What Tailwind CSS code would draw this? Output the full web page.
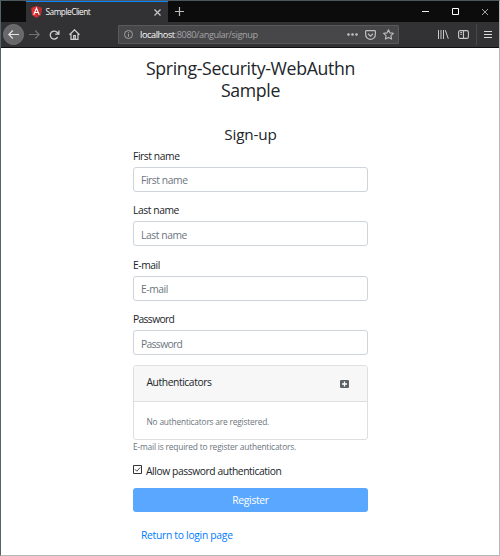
<!DOCTYPE html>
<html lang="en">
<head>
<meta charset="utf-8">
<title>SampleClient</title>
<script src="https://cdn.jsdelivr.net/npm/@tailwindcss/browser@4"></script>
</head>
<body class="w-[500px] h-[556px] overflow-hidden bg-white font-['Open_Sans','Noto_Sans',sans-serif] text-[#212529]">
<div class="w-[500px] h-[556px] flex flex-col border border-t-[#4b5860] border-l-[#56636c] border-r-[#b4b7b9] border-b-[#b4b7b9]">
  <!-- Tab strip -->
  <div class="h-[21px] shrink-0 flex bg-[#0c0c0d] text-[#f9f9fa]">
    <div class="ml-[25px] w-[142px] h-full bg-[#323234] border-t border-[#0a84ff] flex items-center pl-[5px] pr-[7px]">
      <svg class="w-[11px] h-[12px] shrink-0" viewBox="0 0 22 24"><path fill="#e23237" d="M11 0 21.5 3.8 20 18 11 23.5 2 18 .5 3.8z"/><path fill="#b52e31" d="M11 0v23.5L20 18l1.500-14.200z"/><path fill="none" stroke="#fff" stroke-width="2.200" d="M5.500 17.500 11 4.500l5.500 13M8 13h6"/></svg>
      <span class="ml-[3.500px] text-[8.300px] leading-[12px] tracking-[-0.5px] flex-1 whitespace-nowrap">SampleClient</span>
      <svg class="w-[7px] h-[7px] shrink-0" viewBox="0 0 7 7" stroke="#c8c8c9" stroke-width="1.200"><path d="M.5.5l6 6M6.500.5l-6 6"/></svg>
    </div>
    <svg class="ml-[7px] mt-[6px] w-[9px] h-[9px]" viewBox="0 0 9 9" stroke="#bcbcbd" stroke-width="1.200"><path d="M4.500 0v9M0 4.500h9"/></svg>
    <div class="ml-auto flex items-center pr-[11px] gap-[23px]">
      <svg class="w-[7px] h-[7px]" viewBox="0 0 7 7" stroke="#eee"><path d="M0 3.500h7"/></svg>
      <svg class="w-[7px] h-[7px]" viewBox="0 0 7 7" stroke="#fff" fill="none"><path d="M.5.5h6v6h-6z"/></svg>
      <svg class="w-[6px] h-[6px]" viewBox="0 0 6 6" stroke="#ccc" stroke-width=".8"><path d="M0 0l6 6M6 0L0 6"/></svg>
    </div>
  </div>
  <!-- Navigation toolbar -->
  <div class="h-[26px] shrink-0 flex items-center bg-[#323234] border-b border-[#101011] pl-[2px] pr-[7px]">
    <div class="w-[21px] h-[21px] rounded-full bg-[#68686a] border border-[#737375] flex items-center justify-center">
      <svg class="w-[11px] h-[9px]" viewBox="0 0 11 9" fill="none" stroke="#e4e4e5" stroke-width="1.200"><path d="M11 4.500H1M4.800.5l-4 4 4 4"/></svg>
    </div>
    <svg class="ml-[5px] w-[11px] h-[9px]" viewBox="0 0 11 9" fill="none" stroke="#717173" stroke-width="1.200"><path d="M0 4.500h10M6.200.5l4 4-4 4"/></svg>
    <svg class="ml-[9px] w-[11px] h-[10px]" viewBox="0 0 11 10" fill="none" stroke="#d0d0d1" stroke-width="1.300"><path d="M8.600 7.200A4 4 0 1 1 8.300 2.500l1 1M9.900.5v3.700H6.200"/></svg>
    <svg class="ml-[9px] w-[11px] h-[11px]" viewBox="0 0 11 11" fill="none" stroke="#d0d0d1" stroke-width="1.200"><path d="M.5 5.700 5.500.8l5 4.900M2 5v5.300h7V5M4.700 10V6.500h1.600V10"/></svg>
    <div class="ml-[38px] w-[281px] h-[19px] bg-[#474749] border border-[#59595b] rounded-[1px] flex items-center pl-[5px] pr-[4px]">
      <svg class="w-[9px] h-[9px] shrink-0" viewBox="0 0 9 9" fill="none" stroke="#aaaaac" stroke-width=".9"><circle cx="4.500" cy="4.500" r="4"/><path d="M4.500 4v2.800M4.500 2.200v1"/></svg>
      <span class="ml-[7px] text-[9.200px] leading-[14px] tracking-[-0.42px] text-[#a5a5a7] whitespace-nowrap"><span class="text-[#f9f9fa]">localhost</span>:8080/angular/signup</span>
      <svg class="ml-auto w-[11px] h-[3px]" viewBox="0 0 11 3" fill="#c4c4c5"><circle cx="1.500" cy="1.500" r="1.300"/><circle cx="5.500" cy="1.500" r="1.300"/><circle cx="9.500" cy="1.500" r="1.300"/></svg>
      <svg class="ml-[7px] w-[11px] h-[10px]" viewBox="0 0 11 10" fill="none" stroke="#bdbdbe" stroke-width="1.200"><path d="M1.300.7h8.400q.7 0 .7.700v3.100a4.900 4.800 0 0 1-9.800 0V1.400q0-.7.700-.7zM3 3.700l2.500 2.400L8 3.700"/></svg>
      <svg class="ml-[7px] w-[11px] h-[11px]" viewBox="0 0 11 11" fill="none" stroke="#bdbdbe" stroke-width="1.100" stroke-linejoin="round"><path d="M5.500.7 7 3.900l3.400.4-2.500 2.300.7 3.500-3.100-1.700-3.100 1.700.7-3.500L.6 4.300 4 3.900z"/></svg>
    </div>
    <svg class="ml-[39px] w-[11px] h-[9px]" viewBox="0 0 11 9" fill="none" stroke="#c8c8c9"><path d="M.5 0v9M3 0v9M5.500 0v9M7.300.2l3 8.500"/></svg>
    <svg class="ml-[9px] w-[11px] h-[9px]" viewBox="0 0 11 9" fill="none" stroke="#c8c8c9" stroke-width="1.100"><rect x=".6" y=".6" width="9.800" height="7.800" rx="1.500"/><path d="M5.500.5v8M2.300 2.500h1.800M2.300 4.300h1.800"/></svg>
    <div class="ml-[7px] w-px h-[21px] bg-[#48484a]"></div>
    <svg class="ml-auto w-[8px] h-[9px]" viewBox="0 0 8 9" stroke="#dcdcdd"><path d="M0 1.500h8M0 4.500h8M0 7.500h8"/></svg>
  </div>
  <!-- Sign-up page -->
  <main class="w-[235px] ml-[132px] flex flex-col text-[10.300px] leading-[16px] tracking-[-0.42px]">
    <h1 class="mt-[10px] text-[17.700px] leading-[21.500px] text-center tracking-[-0.33px]">Spring-Security-WebAuthn<br>Sample</h1>
    <h2 class="mt-[25px] h-[17px] text-[15.300px] leading-[17px] text-center tracking-[-0.15px]">Sign-up</h2>
    <form class="mt-[4.500px] flex flex-col">
      <label class="h-[54.500px] flex flex-col">First name
        <span class="mt-[3px] h-[25px] border border-[#ced4da] rounded-[3px] px-[7px] pt-[4.500px] leading-[16px] text-[#6c757d]">First name</span></label>
      <label class="h-[54.500px] flex flex-col">Last name
        <span class="mt-[3px] h-[25px] border border-[#ced4da] rounded-[3px] px-[7px] pt-[4.500px] leading-[16px] text-[#6c757d]">Last name</span></label>
      <label class="h-[54.500px] flex flex-col">E-mail
        <span class="mt-[3px] h-[25px] border border-[#ced4da] rounded-[3px] px-[7px] pt-[4.500px] leading-[16px] text-[#6c757d]">E-mail</span></label>
      <label class="h-[54px] flex flex-col tracking-[-0.65px]">Password
        <span class="mt-[3px] h-[25px] border border-[#ced4da] rounded-[3px] px-[7px] pt-[4.500px] leading-[16px] text-[#6c757d]">Password</span></label>
      <section class="h-[75px] border border-[#dfdfdf] rounded-[3px] overflow-hidden">
        <div class="h-[36px] bg-[#f7f7f7] border-b border-[#dfdfdf] flex items-center pl-[12.500px] pr-[18px] justify-between">
          <span class="-mt-[3px]">Authenticators</span>
          <svg class="w-[9px] h-[8px]" viewBox="0 0 9 8"><rect width="9" height="8" rx="1" fill="#5c6369"/><path d="M4.500 1.500v5M2 4h5" stroke="#fff" stroke-width="1.300"/></svg>
        </div>
        <p class="pl-[12.500px] pt-[13px] text-[8.400px] leading-[14px] tracking-[-0.21px] text-[#6c757d] whitespace-nowrap">No authenticators are registered.</p>
      </section>
      <p class="h-[14px] text-[8.400px] leading-[14px] tracking-[-0.19px] text-[#6c757d] whitespace-nowrap">E-mail is required to register authenticators.</p>
      <div class="mt-[9px] h-[16px] flex items-center whitespace-nowrap">
        <svg class="w-[9px] h-[9px] -mt-[3px]" viewBox="0 0 9 9" fill="none" stroke="#333"><path d="M.5.5h8v8h-8z"/><path stroke-width=".9" d="M2 4.300l1.800 1.900L7.200 2.500"/></svg>
        <span class="ml-[4px]">Allow password authentication</span>
      </div>
      <button type="button" class="mt-[9px] h-[24px] rounded-[3px] bg-[#59a7ff] text-white text-center leading-[25px] tracking-[-0.3px]">Register</button>
      <a class="mt-[15px] ml-[8px] text-[#007bff] whitespace-nowrap tracking-[-0.28px]">Return to login page</a>
    </form>
  </main>
</div>
</body>
</html>
